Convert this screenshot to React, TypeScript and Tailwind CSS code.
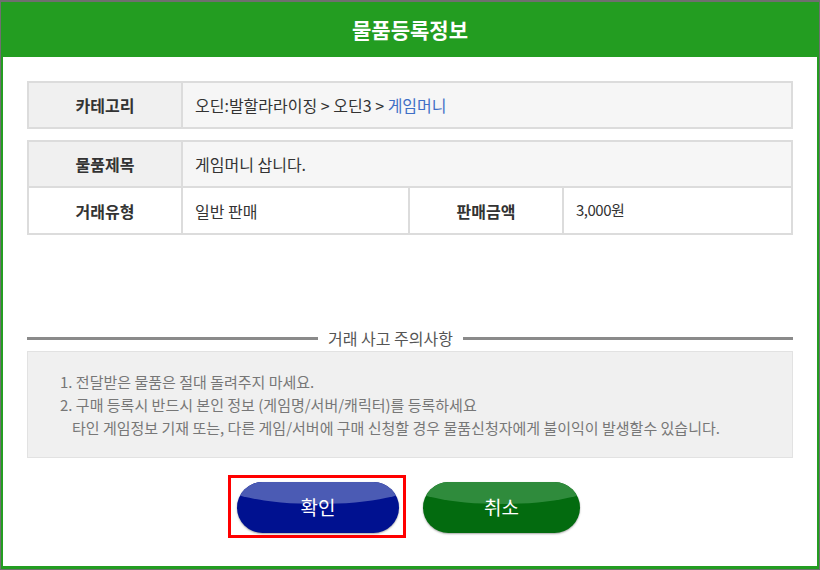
import React from "react";

const font = "font-['Noto_Sans_CJK_KR','Noto_Sans',sans-serif]";

function Label({ children, bg }: { children: React.ReactNode; bg?: string }) {
  return (
    <div
      className={`flex items-center justify-center text-[16px] font-bold text-[#333] ${bg ?? ""}`}
    >
      {children}
    </div>
  );
}

export default function App() {
  return (
    <div className={`w-[820px] h-[570px] bg-[#6f6f6f] pt-[2px] pl-[1px] pr-[1px] pb-[1px] ${font}`}>
      <div className="flex h-full flex-col bg-[#239d21] px-[2px] pb-[3px]">
        {/* header */}
        <div className="flex h-[55px] shrink-0 items-center justify-center text-[21px] font-bold text-white">
          물품등록정보
        </div>

        <div className="flex flex-1 flex-col bg-white px-[24px] pt-[24px]">
          {/* category table */}
          <div className="grid h-[48px] grid-cols-[154px_1fr] border-2 border-[#dcdcdc] bg-[#f6f6f6]">
            <Label bg="bg-[#f0f0f0] border-r-2 border-[#dcdcdc]">카테고리</Label>
            <div className="flex items-center pl-[12px] text-[16px] text-[#333]">
              오딘:발할라라이징 &gt; 오딘3 &gt;&nbsp;<span className="text-[#3f6fc6]">게임머니</span>
            </div>
          </div>

          {/* item table */}
          <div className="mt-[11px] border-2 border-[#dcdcdc]">
            <div className="grid h-[46px] grid-cols-[154px_1fr] border-b-2 border-[#dcdcdc] bg-[#f6f6f6]">
              <Label bg="bg-[#f0f0f0] border-r-2 border-[#dcdcdc]">물품제목</Label>
              <div className="flex items-center pl-[12px] text-[16px] text-[#333]">
                게임머니 삽니다.
              </div>
            </div>
            <div className="grid h-[45px] grid-cols-[154px_227px_154px_1fr] bg-white">
              <Label bg="border-r-2 border-[#dcdcdc]">거래유형</Label>
              <div className="flex items-center border-r-2 border-[#dcdcdc] pl-[12px] text-[16px] text-[#333]">
                일반 판매
              </div>
              <Label bg="border-r-2 border-[#dcdcdc]">판매금액</Label>
              <div className="flex items-center pl-[12px] text-[15px] tracking-[-0.5px] text-[#333]">
                3,000원
              </div>
            </div>
          </div>

          {/* notice divider */}
          <div className="mt-[93px] flex h-[20px] items-center gap-[10px]">
            <div className="h-[3px] w-[291px] bg-[#8a8a8a]" />
            <div className="text-[16px] text-[#555]">거래 사고 주의사항</div>
            <div className="h-[3px] flex-1 bg-[#8a8a8a]" />
          </div>

          <div className="mt-[3px] h-[107px] border border-[#e2e2e2] bg-[#f0f0f0] pl-[32px] pt-[18px] text-[15px] leading-[23px] text-[#777]">
            <div>1. 전달받은 물품은 절대 돌려주지 마세요.</div>
            <div>2. 구매 등록시 반드시 본인 정보 (게임명/서버/캐릭터)를 등록하세요</div>
            <div className="pl-[12px]">
              타인 게임정보 기재 또는, 다른 게임/서버에 구매 신청할 경우 물품신청자에게 불이익이 발생할수 있습니다.
            </div>
          </div>

          {/* buttons */}
          <div className="ml-[201px] mt-[17px] flex gap-[17px]">
            <div className="border-[3px] border-[#ff0000] pb-[2px] pl-[6px] pr-[4px] pt-[4px]">
              <button className="relative h-[51px] w-[162px] overflow-hidden rounded-full bg-[#001190] text-[19px] text-white shadow-[0_1px_2px_rgba(0,0,0,0.35)]">
                <span className="absolute left-[-10%] top-[-20px] h-[42px] w-[120%] rounded-[50%] bg-[#4b5bb4]" />
                <span className="relative">확인</span>
              </button>
            </div>
            <div className="pt-[7px]">
              <button className="relative h-[51px] w-[157px] overflow-hidden rounded-full bg-[#036b0f] text-[19px] text-white shadow-[0_1px_2px_rgba(0,0,0,0.35)]">
                <span className="absolute left-[-10%] top-[-20px] h-[42px] w-[120%] rounded-[50%] bg-[#2f8b3c]" />
                <span className="relative">취소</span>
              </button>
            </div>
          </div>
        </div>
      </div>
    </div>
  );
}
